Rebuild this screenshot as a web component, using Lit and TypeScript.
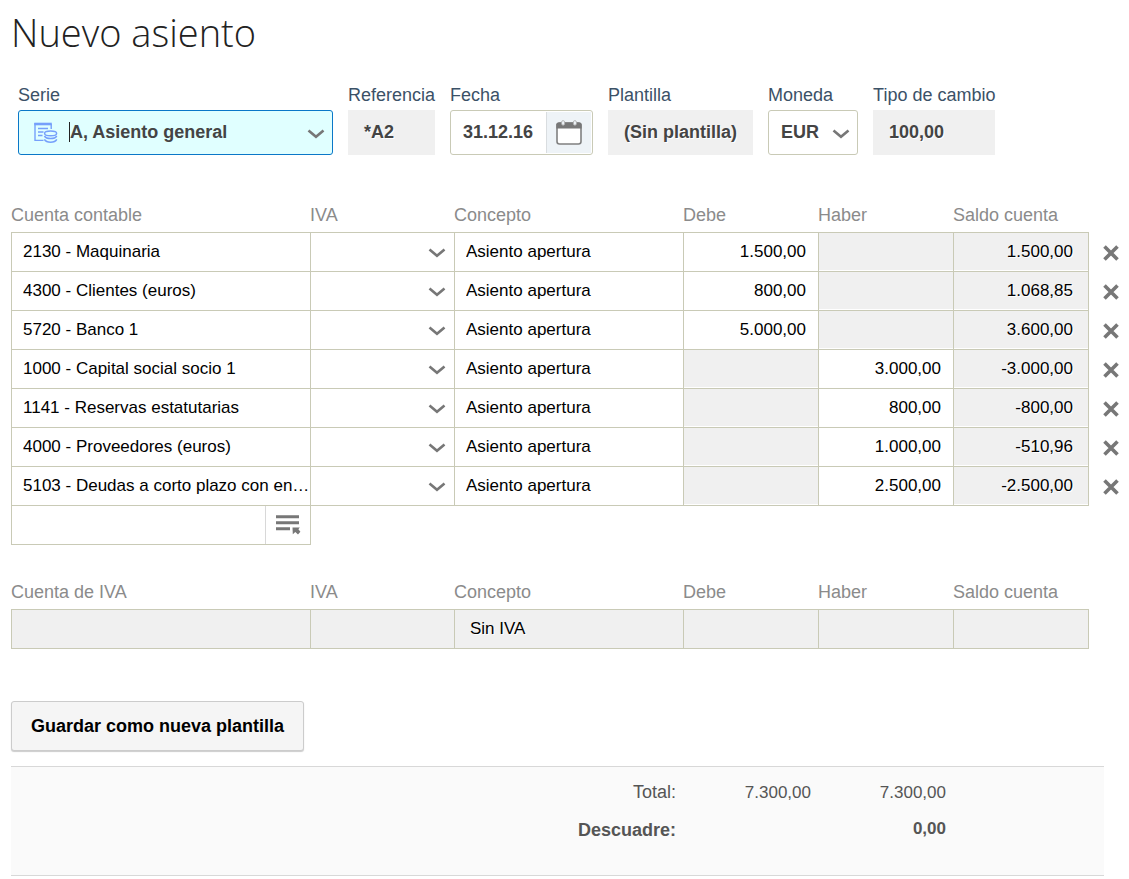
import { LitElement, html, css, svg } from "lit";
import { customElement, property } from "lit/decorators.js";

interface Entry {
  account: string;
  concept: string;
  debit: string;
  credit: string;
  balance: string;
}

const ENTRIES: Entry[] = [
  { account: "2130 - Maquinaria", concept: "Asiento apertura", debit: "1.500,00", credit: "", balance: "1.500,00" },
  { account: "4300 - Clientes (euros)", concept: "Asiento apertura", debit: "800,00", credit: "", balance: "1.068,85" },
  { account: "5720 - Banco 1", concept: "Asiento apertura", debit: "5.000,00", credit: "", balance: "3.600,00" },
  { account: "1000 - Capital social socio 1", concept: "Asiento apertura", debit: "", credit: "3.000,00", balance: "-3.000,00" },
  { account: "1141 - Reservas estatutarias", concept: "Asiento apertura", debit: "", credit: "800,00", balance: "-800,00" },
  { account: "4000 - Proveedores (euros)", concept: "Asiento apertura", debit: "", credit: "1.000,00", balance: "-510,96" },
  {
    account: "5103 - Deudas a corto plazo con entidades de crédito",
    concept: "Asiento apertura",
    debit: "",
    credit: "2.500,00",
    balance: "-2.500,00",
  },
];

const ICONS = {
  chevron: { w: 18, h: 12, body: svg`<path d="M1.5 3.5 L9 9.8 L16.5 3.5" fill="none" stroke="#777" stroke-width="2.6"/>` },
  cross: { w: 16, h: 16, body: svg`<path d="M1.5 1.5 L14.5 14.5 M14.5 1.5 L1.5 14.5" fill="none" stroke="#777" stroke-width="3.6"/>` },
  calendar: {
    w: 26,
    h: 25,
    body: svg`
      <rect x="1" y="3" width="24" height="21" rx="2.5" fill="#fff" stroke="#808080" stroke-width="1.6"/>
      <path d="M0.4 8.5 V4.6 Q0.4 2.4 2.8 2.4 H23.2 Q25.6 2.4 25.6 4.6 V8.5 Z" fill="#777"/>
      <rect x="5.6" y="0.6" width="3" height="4.6" rx="1.5" fill="#eef3f7" stroke="#aaa" stroke-width="0.8"/>
      <rect x="17.4" y="0.6" width="3" height="4.6" rx="1.5" fill="#eef3f7" stroke="#aaa" stroke-width="0.8"/>`,
  },
  list: {
    w: 25,
    h: 20,
    body: svg`
      <path d="M0 1.8 H23 M0 7.8 H23 M0 13.8 H14" fill="none" stroke="#777" stroke-width="3"/>
      <path d="M16.5 12.5 H23.8 L22.4 14.2 L24.4 16.8 L22 19.4 L19.3 17 L16.8 19.2 Z" fill="#777"/>`,
  },
  ledger: {
    w: 24,
    h: 22,
    body: svg`
      <g fill="none" stroke="#76a0fb">
        <path d="M0.3 2 H17.8" stroke-width="2.6"/>
        <path d="M1 1 V18.4 H9.5 M17.2 2 V7" stroke-width="1.4"/>
        <path d="M4 6.5 H14 M4 10 H9.5 M4 13.5 H8.5" stroke-width="1.3"/>
        <ellipse cx="16.6" cy="11.4" rx="6" ry="2.3" stroke-width="1.5"/>
        <path d="M10.4 14 Q12 16.6 16.6 16.6 Q21.2 16.6 22.8 14 M10.4 17.4 Q12 20.2 16.6 20.2 Q21.2 20.2 22.8 17.4" stroke-width="1.5"/>
      </g>`,
  },
};

@customElement("line-icon")
export class LineIcon extends LitElement {
  static styles = css`
    :host {
      display: inline-flex;
      flex: none;
      pointer-events: none;
    }
  `;

  @property() name: keyof typeof ICONS = "chevron";

  render() {
    const icon = ICONS[this.name];
    return html`<svg width=${icon.w} height=${icon.h} viewBox="0 0 ${icon.w} ${icon.h}" aria-hidden="true">${icon.body}</svg>`;
  }
}

@customElement("app-root")
export class AppRoot extends LitElement {
  static styles = css`
    :host {
      display: block;
      font-family: "Liberation Sans", Arial, sans-serif;
      font-size: 17px;
      line-height: 20px;
      color: #000;
      background: #fff;
    }
    * {
      box-sizing: border-box;
    }
    input,
    select,
    button {
      font: inherit;
      color: inherit;
      margin: 0;
      padding: 0;
      border: 0;
      border-radius: 0;
      background: none;
      outline: none;
      appearance: none;
      min-width: 0;
    }
    button {
      display: flex;
      align-items: center;
      justify-content: center;
      cursor: pointer;
    }
    .page {
      padding: 8px 0 0 11px;
    }
    .title {
      margin: 0;
      font-family: "Open Sans", sans-serif;
      font-weight: 300;
      font-size: 38px;
      line-height: 48px;
      color: #222;
    }

    .fields {
      display: flex;
      flex-wrap: wrap;
      gap: 15px;
      padding: 29px 7px 0;
    }
    .field {
      display: flex;
      flex-direction: column;
      gap: 5px;
      font-size: 18px;
      color: #3b5167;
    }
    .box {
      display: flex;
      align-items: center;
      height: 45px;
      font-weight: bold;
      color: #444;
    }
    .fixed {
      padding: 0 16px 2px;
      background: #f0f0f0;
      text-shadow: 1px 1px 0 #fff;
    }
    .editable {
      border: 1px solid #c9cab6;
      border-radius: 3px;
    }
    .editable input,
    .editable select {
      height: 43px;
    }
    .series {
      width: 315px;
      padding: 0 7px 0 15px;
      border-color: #0a78c8;
      background: #e0ffff;
    }
    .caret {
      width: 1px;
      height: 20px;
      margin: 0 0 2px 11px;
      background: #222;
    }
    .grow {
      flex: 1;
    }
    .date-input {
      width: 95px;
      padding-left: 12px;
    }
    .date-button {
      width: 45px;
      height: 41px;
      margin-right: 1px;
      border-left: 1px solid #d9dde0;
      background: #eef3f7;
    }
    .picker {
      display: grid;
      align-items: center;
    }
    .picker > * {
      grid-area: 1 / 1;
    }
    .picker > line-icon {
      justify-self: end;
    }
    .currency {
      padding-right: 7px;
      width: 90px;
    }
    .currency select {
      padding: 0 0 2px 12px;
    }

    .grid {
      width: 100%;
      table-layout: fixed;
      border-collapse: separate;
      border-spacing: 0;
      margin-top: 49px;
    }
    .tax {
      margin-top: 36px;
    }
    .col-account {
      width: 299px;
    }
    .col-vat {
      width: 144px;
    }
    .col-amount {
      width: 135px;
    }
    .col-balance {
      width: 136px;
    }
    .col-remove {
      width: 40px;
    }
    .grid th {
      padding: 1px 0 7px;
      border-bottom: 1px solid #c9cab6;
      font-size: 18px;
      font-weight: normal;
      text-align: left;
      color: #8b8b8b;
    }
    .grid tbody td {
      height: 39px;
      padding: 0;
      border-left: 1px solid #c9cab6;
      border-bottom: 1px solid #c9cab6;
    }
    .grid tbody .balance {
      border-right: 1px solid #c9cab6;
    }
    .grid tbody .bare {
      border: 0;
      background: none;
    }
    .grid tbody .edge {
      border-bottom: 0;
    }
    .cell {
      display: block;
      width: 100%;
      height: 38px;
      padding: 0 12px 0 11px;
      line-height: 38px;
      text-overflow: ellipsis;
    }
    .account {
      padding-right: 0;
    }
    .amount {
      text-align: right;
    }
    .blocked {
      background: #f0f0f0;
      text-shadow: 1px 1px 0 #fff;
      border-bottom: 1px solid #fff;
    }
    .balance .cell {
      padding: 0 15px;
    }
    .vat {
      padding-right: 8px;
    }
    .remove {
      width: 100%;
      height: 38px;
      padding-left: 4px;
    }
    .adder {
      display: flex;
    }
    .adder button {
      flex: none;
      width: 45px;
      height: 38px;
      border-left: 1px solid #d8d8d8;
    }
    .tax tbody td {
      background: #f0f0f0;
    }
    .tax tbody .note {
      padding: 0 15px;
      text-shadow: 1px 1px 0 #fff;
    }

    .save {
      height: 50px;
      margin-top: 52px;
      padding: 0 19px;
      border: 1px solid #ccc;
      border-radius: 3px;
      background: #f5f5f5;
      box-shadow: 0 1px 1px #ccc;
      font-size: 18px;
      font-weight: bold;
    }
    .totals {
      display: grid;
      grid-template-columns: 1fr 135px 135px 158px;
      align-items: baseline;
      row-gap: 16px;
      margin: 15px 25px 0 0;
      padding: 14px 0 34px;
      border: solid #d8d8d8;
      border-width: 1px 0;
      background: #fafafa;
      color: #555;
      text-align: right;
    }
    .caption {
      grid-column: 1;
      font-size: 18px;
      line-height: 22px;
    }
    .strong {
      align-self: start;
      font-weight: bold;
    }
    .last {
      grid-column: 3;
    }
  `;

  private heading(account: string, id: string) {
    return html`
      <colgroup>
        <col class="col-account" />
        <col class="col-vat" />
        <col />
        <col class="col-amount" />
        <col class="col-amount" />
        <col class="col-balance" />
        <col class="col-remove" />
      </colgroup>
      <thead>
        <tr>
          <th scope="col" id="${id}-account">${account}</th>
          <th scope="col" id="${id}-vat">IVA</th>
          <th scope="col" id="${id}-concept">Concepto</th>
          <th scope="col" id="${id}-debit">Debe</th>
          <th scope="col" id="${id}-credit">Haber</th>
          <th scope="col" id="${id}-balance">Saldo cuenta</th>
          <td></td>
        </tr>
      </thead>
    `;
  }

  private amount(value: string, column: string) {
    return value
      ? html`<input class="cell amount" aria-labelledby="entry-${column}" .value=${value} />`
      : html`<span class="cell blocked"></span>`;
  }

  private row(entry: Entry) {
    return html`
      <tr>
        <td><input class="cell account" aria-labelledby="entry-account" .value=${entry.account} /></td>
        <td>
          <div class="picker vat">
            <select class="cell" aria-labelledby="entry-vat">
              <option></option>
            </select>
            <line-icon name="chevron"></line-icon>
          </div>
        </td>
        <td><input class="cell" aria-labelledby="entry-concept" .value=${entry.concept} /></td>
        <td>${this.amount(entry.debit, "debit")}</td>
        <td>${this.amount(entry.credit, "credit")}</td>
        <td class="balance"><span class="cell amount blocked">${entry.balance}</span></td>
        <td class="bare">
          <button class="remove" type="button" aria-label="Eliminar"><line-icon name="cross"></line-icon></button>
        </td>
      </tr>
    `;
  }

  render() {
    return html`
      <main class="page">
        <h1 class="title">Nuevo asiento</h1>

        <div class="fields">
          <div class="field">
            <label for="series">Serie</label>
            <div class="box editable series">
              <line-icon name="ledger"></line-icon>
              <span class="caret"></span>
              <input class="grow" id="series" role="combobox" aria-expanded="false" .value=${"A, Asiento general"} />
              <line-icon name="chevron"></line-icon>
            </div>
          </div>
          <div class="field">
            <label for="reference">Referencia</label>
            <output class="box fixed" id="reference">*A2</output>
          </div>
          <div class="field">
            <label for="date">Fecha</label>
            <div class="box editable">
              <input class="date-input" id="date" .value=${"31.12.16"} />
              <button class="date-button" type="button" aria-label="Calendario">
                <line-icon name="calendar"></line-icon>
              </button>
            </div>
          </div>
          <div class="field">
            <label for="template">Plantilla</label>
            <output class="box fixed" id="template">(Sin plantilla)</output>
          </div>
          <div class="field">
            <label for="currency">Moneda</label>
            <div class="box editable picker currency">
              <select id="currency">
                <option>EUR</option>
              </select>
              <line-icon name="chevron"></line-icon>
            </div>
          </div>
          <div class="field">
            <label for="rate">Tipo de cambio</label>
            <output class="box fixed" id="rate">100,00</output>
          </div>
        </div>

        <table class="grid">
          ${this.heading("Cuenta contable", "entry")}
          <tbody>
            ${ENTRIES.map((entry) => this.row(entry))}
            <tr>
              <td>
                <div class="adder">
                  <input class="cell" aria-labelledby="entry-account" />
                  <button type="button" aria-label="Lista de cuentas"><line-icon name="list"></line-icon></button>
                </div>
              </td>
              <td class="edge" colspan="6"></td>
            </tr>
          </tbody>
        </table>

        <table class="grid tax">
          ${this.heading("Cuenta de IVA", "tax")}
          <tbody>
            <tr>
              <td></td>
              <td></td>
              <td class="note">Sin IVA</td>
              <td></td>
              <td></td>
              <td class="balance"></td>
              <td class="bare"></td>
            </tr>
          </tbody>
        </table>

        <button class="save" type="button">Guardar como nueva plantilla</button>

        <section class="totals">
          <span class="caption">Total:</span>
          <span>7.300,00</span>
          <span>7.300,00</span>
          <span class="caption strong">Descuadre:</span>
          <span class="strong last">0,00</span>
        </section>
      </main>
    `;
  }
}
